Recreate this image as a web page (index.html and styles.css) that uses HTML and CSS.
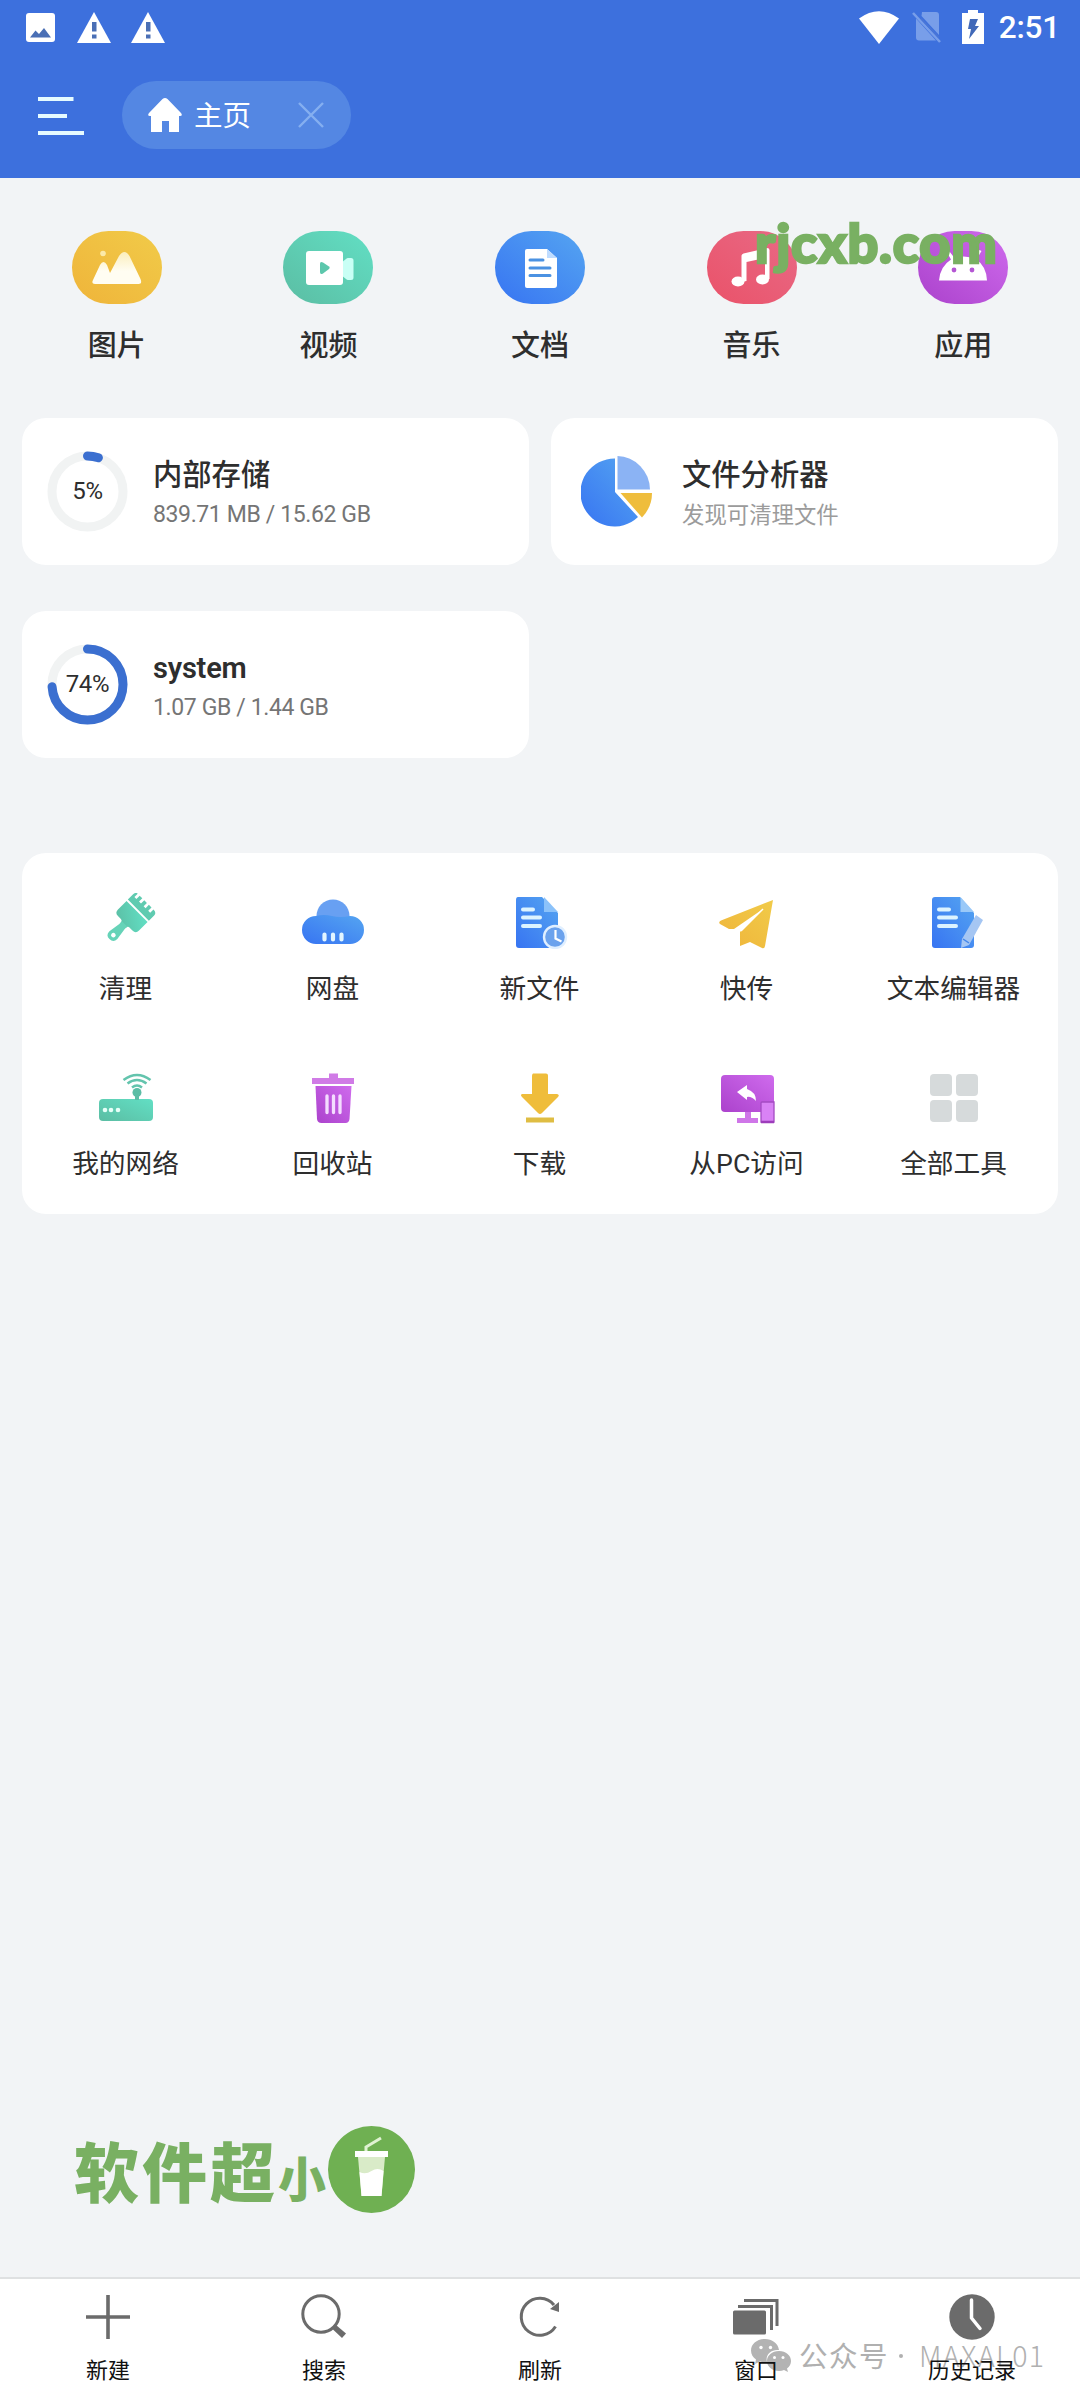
FILE: index.html
```html
<!DOCTYPE html>
<html lang="zh-CN">
<head>
<meta charset="utf-8">
<title>主页</title>
<link rel="stylesheet" href="styles.css">
</head>
<body>
<svg class="defs" width="0" height="0" aria-hidden="true">
  <defs>
    <linearGradient id="yellow" x1="1" y1="0" x2="0" y2="1"><stop offset="0" stop-color="#f1cb49"/><stop offset="1" stop-color="#efb43a"/></linearGradient>
    <linearGradient id="green" x1="1" y1="0" x2="0" y2="1"><stop offset="0" stop-color="#62dfc4"/><stop offset="1" stop-color="#5bbda3"/></linearGradient>
    <linearGradient id="blue" x1="1" y1="0" x2="0" y2="1"><stop offset="0" stop-color="#55a5f1"/><stop offset="1" stop-color="#3774f2"/></linearGradient>
    <linearGradient id="red" x1="1" y1="0" x2="0" y2="1"><stop offset="0" stop-color="#e86a86"/><stop offset="1" stop-color="#ea5269"/></linearGradient>
    <linearGradient id="purple" x1="1" y1="0" x2="0" y2="1"><stop offset="0" stop-color="#cf6bed"/><stop offset="1" stop-color="#ab42cc"/></linearGradient>
    <linearGradient id="snow" x1="0" y1="0" x2="0" y2="1"><stop offset="0" stop-color="#fbeebc"/><stop offset=".6" stop-color="#fffdf2"/></linearGradient>
  </defs>
</svg>

<header class="header">
  <div class="status">
    <div class="status-left">
      <svg width="29" height="29" viewBox="0 0 29 29"><rect width="29" height="29" rx="3" fill="#fff"/><path d="M4 24.500l5.500-7 3.500 3.500 5-6 7 9.500z" fill="#4a6fb5"/></svg>
      <svg width="34" height="31" viewBox="0 0 34 31"><path d="M17 0l17 31H0z" fill="#fff"/><path d="M15 10h4.500v9.500H15zM15 22.500h4.500v4H15z" fill="#4a6fb5"/></svg>
      <svg width="34" height="31" viewBox="0 0 34 31"><path d="M17 0l17 31H0z" fill="#fff"/><path d="M15 10h4.500v9.500H15zM15 22.500h4.500v4H15z" fill="#4a6fb5"/></svg>
    </div>
    <div class="status-right">
      <svg class="wifi" width="40" height="33" viewBox="0 0 40 33"><path d="M0 7.500Q20-7 40 7.500L20 33z" fill="#fff"/></svg>
      <svg class="sim" width="29" height="32" viewBox="0 0 29 32"><path d="M10 1h14q3 0 3 3v20L9.500 5zM4 7.500l20 22H7q-3 0-3-3z" fill="#789ee9"/><path d="M1 2l27 29" stroke="#789ee9" stroke-width="2.500"/><path d="M9 7.500l18 19" stroke="#4a76d6" stroke-width="1.500"/></svg>
      <svg class="battery" width="22" height="34" viewBox="0 0 22 34"><path d="M6 0h10v3h6v31H0V3h6z" fill="#fff"/><path d="M8 9h8l-3 7h4L7 29l2-10H6z" fill="#4169b8"/></svg>
      <span class="time">2:51</span>
    </div>
  </div>
  <div class="toolbar">
    <svg class="menu" width="46" height="38" viewBox="0 0 46 38"><path d="M0 2h35.500M0 19h29M0 36h46" stroke="#e6fbff" stroke-width="4"/></svg>
    <div class="tab">
      <svg width="34" height="34" viewBox="0 0 34 34"><path d="M14.500 1Q17-1 19.500 1L33 15q2 3-1 3H31v16H21V23h-7v11H3V18H2q-3 0-1-3z" fill="#fff"/></svg>
      <span class="tab-name">主页</span>
      <svg class="close" width="26" height="26" viewBox="0 0 26 26"><path d="M1 1l24 24M25 1L1 25" stroke="#85aff0" stroke-width="2.400"/></svg>
    </div>
  </div>
</header>

<main class="main">
  <nav class="categories">
    <div class="category">
      <svg width="90" height="73" viewBox="0 0 90 73"><rect width="90" height="73" rx="36.500" fill="url(#yellow)"/><circle cx="31" cy="22.500" r="2.800" fill="#fbe9a8"/><path d="M23 53q-4 0-2-4l7-15q3.500-6 7 0l3 8 9-17q5.500-8 10.500 0l11 23q2 5-2 5z" fill="url(#snow)"/></svg>
      <span>图片</span>
    </div>
    <div class="category">
      <svg width="90" height="73" viewBox="0 0 90 73"><rect width="90" height="73" rx="36.500" fill="url(#green)"/><path d="M58 32l5-4q1-1 2-1h3q2.500 0 2.500 2.500v17q0 2.500-2.500 2.500h-3q-1 0-2-1l-5-4z" fill="#c9fff5"/><rect x="23" y="20" width="37" height="34" rx="3" fill="#fff"/><path d="M37 33q0-3 3-1.500l6 4q1.500 1 0 2.500l-6 4.500q-3 1.500-3-1.500z" fill="#5cc7ac"/></svg>
      <span>视频</span>
    </div>
    <div class="category">
      <svg width="90" height="73" viewBox="0 0 90 73"><rect width="90" height="73" rx="36.500" fill="url(#blue)"/><path d="M32 18h20l10 9v27q0 3-3 3H32q-2 0-2-2V20q0-2 2-2z" fill="#fff"/><path d="M52 18l10 9H52z" fill="#bfdcff"/><path d="M35 29h13M35 37h20M35 44.500h20" stroke="#4b92e2" stroke-width="3" stroke-linecap="round"/></svg>
      <span>文档</span>
    </div>
    <div class="category">
      <svg width="90" height="73" viewBox="0 0 90 73"><rect width="90" height="73" rx="36.500" fill="url(#red)"/><ellipse cx="31" cy="50.500" rx="6.500" ry="5" fill="#fff"/><ellipse cx="55.500" cy="48.500" rx="6.500" ry="5" fill="#fff"/><path d="M34.500 51V25q0-2 2-2.500L60 17q2.500 0 2.500 2v29h-4.500V27L39.500 31v19z" fill="#fff"/></svg>
      <span>音乐</span>
    </div>
    <div class="category">
      <svg width="90" height="73" viewBox="0 0 90 73"><rect width="90" height="73" rx="36.500" fill="url(#purple)"/><path d="M21 49.500q1-14 12-21l-4-7 2.500-1 5 6.500q9-3 18 0l7-8 2 1-5 8.500q10 7 10.500 21z" fill="#fff"/><circle cx="36" cy="39" r="2.400" fill="#b456d3"/><circle cx="54" cy="39" r="2.400" fill="#b456d3"/></svg>
      <span>应用</span>
    </div>
    <div class="site-mark">rjcxb.com</div>
  </nav>

  <section class="cards">
    <article class="card">
      <div class="ring">
        <svg width="81" height="81" viewBox="0 0 81 81"><circle cx="40.500" cy="40.500" r="35.500" fill="none" stroke="#f1f3f3" stroke-width="9"/><circle cx="40.500" cy="40.500" r="35.500" fill="none" stroke="#3b6fd0" stroke-width="9" stroke-linecap="round" pathLength="100" stroke-dasharray="5 100" transform="rotate(-90 40.500 40.500)"/></svg>
        <span class="percent">5%</span>
      </div>
      <div class="info"><h2>内部存储</h2><p>839.71 MB / 15.62 GB</p></div>
    </article>
    <article class="card card-analyzer">
      <svg class="pie" width="72" height="72" viewBox="0 0 72 72"><path d="M34 2.500A34 34 0 1 0 57 61L34 36z" fill="url(#blue)"/><path d="M36.500 0A33.500 34 0 0 1 69 33.500H36.500z" fill="#8bb3f4"/><path d="M39.500 37H71Q71 51 61 61.500z" fill="#efbd3c"/></svg>
      <div class="info"><h2>文件分析器</h2><p class="hint">发现可清理文件</p></div>
    </article>
    <article class="card">
      <div class="ring">
        <svg width="81" height="81" viewBox="0 0 81 81"><circle cx="40.500" cy="40.500" r="35.500" fill="none" stroke="#f1f3f3" stroke-width="9"/><circle cx="40.500" cy="40.500" r="35.500" fill="none" stroke="#3b6fd0" stroke-width="9" stroke-linecap="round" pathLength="100" stroke-dasharray="74 100" transform="rotate(-90 40.500 40.500)"/></svg>
        <span class="percent">74%</span>
      </div>
      <div class="info"><h2 class="latin">system</h2><p>1.07 GB / 1.44 GB</p></div>
    </article>
  </section>

  <section class="tools">
    <div class="tool">
      <svg width="64" height="56" viewBox="0 0 64 56"><g transform="translate(34.500 27) rotate(45) scale(.93) translate(-24 -27)"><path d="M8 12V4q0-4 3-4v5h3V0h4v5h3V0h4v5h3V0h4v5h3V0q5 0 5 4v8z" fill="#5fcbb0"/><path d="M8 14h32v13q0 5-5 5H30q-2 0-2 3H20q0-3-3-3h-4q-5 0-5-5z" fill="url(#green)"/><path d="M20 33h8v4l2 13q0 6-6 6t-6-6l2-13z" fill="#66d3b8"/><circle cx="24" cy="50" r="2.500" fill="#fff"/></g></svg>
      <span>清理</span>
    </div>
    <div class="tool">
      <svg width="64" height="56" viewBox="0 0 64 56"><circle cx="32" cy="23" r="16.500" fill="#68a0f2"/><path d="M15 23q8-2 16 0 8 2 18 0a14 14 0 0 1 0 28H15a14 14 0 0 1 0-28z" fill="url(#blue)"/><path d="M23.500 41.500v5M32 41.500v5M40.500 41.500v5" stroke="#e2f5ff" stroke-width="4.200" stroke-linecap="round"/></svg>
      <span>网盘</span>
    </div>
    <div class="tool">
      <svg width="64" height="56" viewBox="0 0 64 56"><path d="M10 4h24l16 16v32q0 3-3 3H11q-3 0-3-3V7q0-3 2-3z" fill="url(#blue)"/><path d="M36 4l14 15H36z" fill="#8bc2fa"/><path d="M15 16.500h10M15 24.500h17M15 33h17" stroke="#dcf3ff" stroke-width="4" stroke-linecap="round"/><circle cx="47" cy="44" r="11" fill="#6ba2ed" stroke="#e0efff" stroke-width="2.400"/><path d="M47.500 37v8.500l6 3" fill="none" stroke="#fff" stroke-width="2.200"/></svg>
      <span>新文件</span>
    </div>
    <div class="tool">
      <svg width="64" height="56" viewBox="0 0 64 56"><path d="M58 7L50 53q-.5 3-3 2L35 49l-10 4v-14L48 16 19 36H14L5 31q-2-2 1-3.500z" fill="url(#yellow)"/><path d="M48 16L26 38" stroke="#fff" stroke-width="1.500"/></svg>
      <span>快传</span>
    </div>
    <div class="tool">
      <svg width="64" height="56" viewBox="0 0 64 56"><path d="M13 4h25l14 16v32q0 3-3 3H13q-3 0-3-3V7q0-3 3-3z" fill="url(#blue)"/><path d="M38.500 4L52 19H38.500z" fill="#9ac9f8"/><path d="M17 16.500h10M17 24.500h17M17 33h17" stroke="#dcf3ff" stroke-width="4" stroke-linecap="round"/><path d="M54 22l7 5-14 25-8 3 1-9z" fill="#a5c6f3"/><path d="M41 46l6 4" stroke="#4386ec" stroke-width="1.500"/></svg>
      <span>文本编辑器</span>
    </div>
    <div class="tool">
      <svg width="64" height="56" viewBox="0 0 64 56"><rect x="5" y="31" width="54" height="22" rx="4" fill="url(#green)"/><circle cx="11" cy="42" r="2.300" fill="#e6fff8"/><circle cx="17" cy="42" r="2.300" fill="#e6fff8"/><circle cx="24" cy="42" r="2.300" fill="#e6fff8"/><circle cx="43" cy="24.500" r="4.500" fill="#5bbda5"/><path d="M43 25v7" stroke="#5bbda5" stroke-width="4"/><path d="M29.500 12q13.500-10 27 0M33.500 15.500q9.500-7 19 0M38 19.500q5-4 10 0" fill="none" stroke="#63c4ad" stroke-width="2.500"/></svg>
      <span>我的网络</span>
    </div>
    <div class="tool">
      <svg width="64" height="56" viewBox="0 0 64 56"><path d="M28 5.500h9v4.500h16v6H11v-6h17z" fill="#d07be6"/><path d="M14.500 18h36l-2 33q-.5 4-4 4h-24q-4 0-4.500-4z" fill="url(#purple)"/><path d="M26 28v16.500M32.500 28v16.500M39 28v16.500" stroke="#f4dcff" stroke-width="3.300" stroke-linecap="round"/></svg>
      <span>回收站</span>
    </div>
    <div class="tool">
      <svg width="64" height="56" viewBox="0 0 64 56"><path d="M25 5.500h13q2 0 2 2V26h9q3 1 1 3L34 45q-2 2-4 0L14 29q-2-2 0-3h10V8q0-2 1-2.500z" fill="#efbd3b"/><path d="M18 52h28" stroke="#dfbd43" stroke-width="5"/></svg>
      <span>下载</span>
    </div>
    <div class="tool">
      <svg width="64" height="56" viewBox="0 0 64 56"><rect x="6" y="7" width="53" height="37" rx="4" fill="url(#purple)"/><path d="M30 44h6v6h7v5H22v-5h8z" fill="#cf76e8"/><path d="M22 24l10-7v4q9 3 9 12-5-5-9-4v3z" fill="#fff"/><path d="M47 34h12v20H46V35q0-1 1-1z" fill="#d982f5" stroke="#a44bc2" stroke-width="1.300"/><path d="M46 54h13" stroke="#9d3dbb" stroke-width="2.500"/></svg>
      <span>从PC访问</span>
    </div>
    <div class="tool">
      <svg width="64" height="56" viewBox="0 0 64 56"><g fill="#d6dadb"><rect x="8" y="6" width="22" height="22" rx="4"/><rect x="34" y="6" width="22" height="22" rx="4"/><rect x="8" y="32" width="22" height="22" rx="4"/><rect x="34" y="32" width="22" height="22" rx="4"/></g></svg>
      <span>全部工具</span>
    </div>
  </section>

  <div class="brand">
    <span class="brand-big">软件超</span><span class="brand-small">小</span>
    <svg width="87" height="87" viewBox="0 0 87 87"><circle cx="43.500" cy="43.500" r="43.500" fill="#6fb052"/><path d="M38 26v-5l15-9" fill="none" stroke="#e0f2d2" stroke-width="3"/><path d="M27 25h33v6H27z" fill="#fff"/><path d="M30 31h27l-3.500 39h-20z" fill="#d9ebc8"/><path d="M31.500 46q6 3 12-1t12 0L53.500 70h-20z" fill="#fff"/></svg>
  </div>
</main>

<footer class="bottom">
  <div class="wechat">
    <svg width="40" height="33" viewBox="0 0 40 33"><path d="M14 0C6 0 0 5 0 11.500c0 4 2 7 5 9L4 25l5-2.500q4 1 7 .5C14 16 20 10 28 11 27 4 21 0 14 0z" fill="#b3b3b3"/><path d="M28 12c-7 0-12 4.500-12 10s5 10 12 10q3 0 5-1l4 2-1-3.500c2.500-2 4-4.500 4-7.500 0-5.500-5-10-12-10z" fill="#b3b3b3"/><g fill="#fff"><circle cx="10" cy="8.500" r="1.700"/><circle cx="19.500" cy="8.500" r="1.700"/><circle cx="23.500" cy="18.500" r="1.500"/><circle cx="32" cy="18.500" r="1.500"/></g></svg>
    <span class="wechat-label">公众号</span><span class="wechat-dot"></span><span class="wechat-id">MAXAL01</span>
  </div>
  <div class="action">
    <svg width="46" height="46" viewBox="0 0 46 46"><path d="M23 1v44M1 23h44" stroke="#6b6b6b" stroke-width="3.600"/></svg>
    <span>新建</span>
  </div>
  <div class="action">
    <svg width="46" height="46" viewBox="0 0 46 46"><circle cx="20" cy="20" r="18.200" fill="none" stroke="#6b6b6b" stroke-width="3"/><path d="M32 32l3-1 10 8.500-4 4.500-9-8.500z" fill="#6b6b6b"/></svg>
    <span>搜索</span>
  </div>
  <div class="action">
    <svg width="46" height="46" viewBox="0 0 46 46"><path d="M38.500 32.500A18.500 18.500 0 1 1 37 11" fill="none" stroke="#6b6b6b" stroke-width="3"/><path d="M42 8v10l-9-3z" fill="#6b6b6b"/></svg>
    <span>刷新</span>
  </div>
  <div class="action">
    <svg width="46" height="46" viewBox="0 0 46 46"><rect y="16.500" width="33" height="24" rx="1.500" fill="#6b6b6b"/><path d="M5 12.500h33.500V36M11 6.500h33V32" fill="none" stroke="#6b6b6b" stroke-width="3"/></svg>
    <span>窗口</span>
  </div>
  <div class="action">
    <svg width="46" height="46" viewBox="0 0 46 46"><circle cx="23" cy="23" r="22.700" fill="#6b6b6b"/><path d="M22.500 6v18l8.500 10.500" fill="none" stroke="#fff" stroke-width="3.500" stroke-linecap="round"/></svg>
    <span>历史记录</span>
  </div>
</footer>
</body>
</html>
```
FILE: styles.css
```css
* { box-sizing: border-box; }

body {
  margin: 0;
  width: 1080px;
  height: 2400px;
  display: flex;
  flex-direction: column;
  overflow: hidden;
  background: #f2f4f6;
  color: #2e2e2e;
  font-family: Roboto, "Noto Sans CJK SC", sans-serif;
}

svg { display: block; flex: none; }
.defs { position: absolute; }
h2, p { margin: 0; }

.header { height: 178px; background: #3d70dd; color: #fff; }

.status {
  height: 54px;
  padding: 0 20px 0 26px;
  display: flex;
  justify-content: space-between;
  align-items: center;
}
.status-left { display: flex; align-items: center; gap: 20px; }
.status-left svg:first-child { margin-right: 2px; }
.status-right { display: flex; align-items: center; }
.sim { margin-left: 13px; }
.battery { margin-left: 21px; }
.time { margin-left: 15px; font-size: 31.500px; line-height: 40px; font-weight: 500; letter-spacing: -0.2px; padding-top: 2px; }

.toolbar { height: 124px; padding: 27px 0 0 38px; display: flex; }
.menu { margin-top: 16px; }
.tab {
  margin-left: 38px;
  width: 229px;
  height: 68px;
  padding-left: 26px;
  display: flex;
  align-items: center;
  border-radius: 34px;
  background: #5487e3;
}
.tab-name { margin-left: 12px; padding-top: 3px; font-size: 28.500px; line-height: 40px; }
.close { margin-left: 47px; }

.main { flex: 1; display: flex; flex-direction: column; }

.categories {
  position: relative;
  margin: 53px 11px 0;
  height: 187px;
  display: grid;
  grid-template-columns: repeat(5, 1fr);
}
.category { display: flex; flex-direction: column; align-items: center; gap: 22px; }
.category span { font-size: 29px; line-height: 40px; font-weight: 500; }
.site-mark {
  position: absolute;
  left: 744px;
  top: -18px;
  font: 900 54px/60px Lato, sans-serif;
  letter-spacing: 0.8px;
  color: #79b062;
  -webkit-text-stroke: 2.500px #79b062;
}

.cards {
  padding: 0 22px;
  display: grid;
  grid-template-columns: repeat(2, 507px);
  grid-auto-rows: 147px;
  gap: 46px 22px;
}
.card {
  display: flex;
  align-items: center;
  padding-left: 25px;
  border-radius: 24px;
  background: #fff;
}
.ring { position: relative; width: 81px; height: 81px; }
.percent {
  position: absolute;
  inset: 0;
  text-align: center;
  font-size: 24px;
  letter-spacing: -0.3px;
  line-height: 81px;
}
.info { margin-left: 25px; padding-top: 2px; }
.card-analyzer { padding-left: 30px; }
.card-analyzer .info { margin-left: 29px; }
.info h2 { font-size: 29.300px; line-height: 42px; font-weight: 500; }
.info .latin { font-size: 29px; font-weight: 600; letter-spacing: -0.2px; }
.info p { font-size: 23px; line-height: 34px; color: #757575; padding-top: 2px; letter-spacing: -0.38px; }
.info .hint { font-size: 22.400px; color: #9b9b9b; letter-spacing: 0; }

.tools {
  margin: 95px 22px 0;
  height: 361px;
  padding-top: 40px;
  display: grid;
  grid-template-columns: repeat(5, 207px);
  grid-auto-rows: 175px;
  align-content: start;
  border-radius: 24px;
  background: #fff;
}
.tool { display: flex; flex-direction: column; align-items: center; gap: 20px; }
.tool span { font-size: 26.700px; line-height: 40px; white-space: nowrap; }

.brand {
  margin: auto 0 64px 74px;
  height: 87px;
  display: flex;
  align-items: center;
  color: #79b062;
  font-family: "Noto Sans CJK SC", sans-serif;
  font-weight: 900;
}
.brand-big { font-size: 65px; letter-spacing: 3px; line-height: 87px; }
.brand-small { font-size: 48px; line-height: 60px; padding-top: 12px; width: 50px; }

.bottom {
  position: relative;
  height: 123px;
  padding-top: 15px;
  border-top: 2px solid #dfe1e2;
  display: grid;
  grid-template-columns: repeat(5, 216px);
  background: #fff;
}
.action { position: relative; display: flex; flex-direction: column; align-items: center; gap: 16px; }
.action span { font-size: 22px; line-height: 30px; color: #111; }
.wechat {
  position: absolute;
  left: 751px;
  top: 57px;
  height: 40px;
  display: flex;
  align-items: center;
  color: #b0b0b0;
  font-family: "Noto Sans CJK SC", sans-serif;
  font-size: 28.500px;
  line-height: 38px;
}
.wechat svg { margin-bottom: 2px; }
.wechat-label, .wechat-id { padding-bottom: 2px; }
.wechat-label { margin-left: 8px; letter-spacing: 1.500px; }
.wechat-dot { width: 4px; height: 4px; margin: 0 16px 0 10px; border-radius: 2px; background: #b0b0b0; }
.wechat-id { font-weight: 300; letter-spacing: 1.300px; }
```
